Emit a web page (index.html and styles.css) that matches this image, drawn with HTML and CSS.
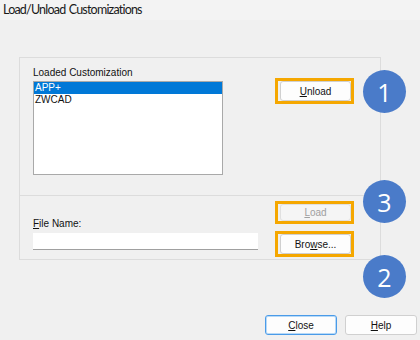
FILE: index.html
```html
<!DOCTYPE html>
<html>
<head>
<meta charset="utf-8">
<link rel="stylesheet" href="styles.css">
</head>
<body>
<div class="page">
  <div class="title">Load/Unload Customizations</div>
  <div class="panel">
    <div class="sec sec-top">
      <div class="col-left list-col">
        <div class="label">Loaded Customization</div>
        <div class="listbox">
          <div class="item sel">APP+</div>
          <div class="item">ZWCAD</div>
        </div>
      </div>
      <div class="col-right top-right">
        <div class="hl"><button class="btn"><u>U</u>nload</button></div>
      </div>
    </div>
    <div class="sec sec-bottom">
      <div class="col-left file-col">
        <div class="label"><u>F</u>ile Name:</div>
        <div class="input"></div>
      </div>
      <div class="col-right stack">
        <div class="hl hl-load"><button class="btn disabled"><u>L</u>oad</button></div>
        <div class="hl"><button class="btn">Bro<u>w</u>se...</button></div>
      </div>
    </div>
  </div>
  <div class="footer">
    <button class="btn fbtn default"><u>C</u>lose</button>
    <button class="btn fbtn"><u>H</u>elp</button>
  </div>
  <div class="badge b1">1</div>
  <div class="badge b3">3</div>
  <div class="badge b2">2</div>
</div>
</body>
</html>
```

FILE: styles.css
```css
* { box-sizing: border-box; }
html, body { margin: 0; padding: 0; }
body { background: #f0f0f0; font-family: "Liberation Sans", Arial, sans-serif; font-size: 10px; color: #000; }
.page { position: relative; width: 420px; height: 340px; overflow: hidden; }
.title { height: 20px; line-height: 19px; padding-left: 3px; font-family: Lato, "Noto Sans", sans-serif; font-size: 12.5px; letter-spacing: -0.8px; word-spacing: 1px; color: #1a1a1a; background: #f3f3f3; }
.panel { margin: 37px 0 0 19px; width: 362px; border: 1px solid #dcdcdc; }
.sec { display: flex; padding-left: 13px; }
.sec-top { height: 137px; padding-top: 8px; }
.sec-bottom { height: 64px; border-top: 1px solid #dcdcdc; }
.label { height: 13px; line-height: 13px; margin-bottom: 2px; white-space: nowrap; color: #111; }
.list-col { width: 190px; }
.listbox { height: 94px; background: #fff; border: 1px solid #a9a9a9; }
.item { height: 12px; line-height: 12px; padding-left: 1px; color: #111; }
.item.sel { background: #0078d7; color: #fff; }
.top-right { margin-left: 52px; margin-top: 12px; }
.hl { border: 3px solid #f5a700; padding-left: 2px; display: flex; width: 79px; height: 26px; }
.btn { width: 71px; height: 20px; padding: 0; border: 1px solid #d0d0d0; border-radius: 3px; background: #fdfdfd; font-family: "Liberation Sans", Arial, sans-serif; font-size: 10px; color: #111; }
.btn.disabled { background: #f5f5f5; color: #a0a0a0; border-color: #e0e0e0; }
.hl-load { height: 23px; }
.hl-load .btn { height: 17px; }
.file-col { width: 225px; padding-top: 21px; }
.file-col .label { margin-bottom: 3px; }
.input { height: 17px; background: #fff; border-bottom: 1px solid #a0a0a0; }
.stack { margin-left: 17px; margin-top: 5px; display: flex; flex-direction: column; gap: 7px; }
.footer { display: flex; justify-content: flex-end; gap: 8px; padding-right: 3px; margin-top: 55px; }
.fbtn { width: 72px; height: 20px; }
.fbtn.default { border-color: #4a9be8; box-shadow: inset 0 0 0 1px #b7d9f7; }
.badge { position: absolute; left: 363px; width: 43px; height: 43px; border-radius: 50%; background: #4a7bc9; color: #fff; font-family: "Open Sans", "Noto Sans", sans-serif; font-size: 25px; display: flex; align-items: center; justify-content: center; }
.b1 { top: 70px; }
.b3 { top: 180px; }
.b2 { top: 255px; }
```
